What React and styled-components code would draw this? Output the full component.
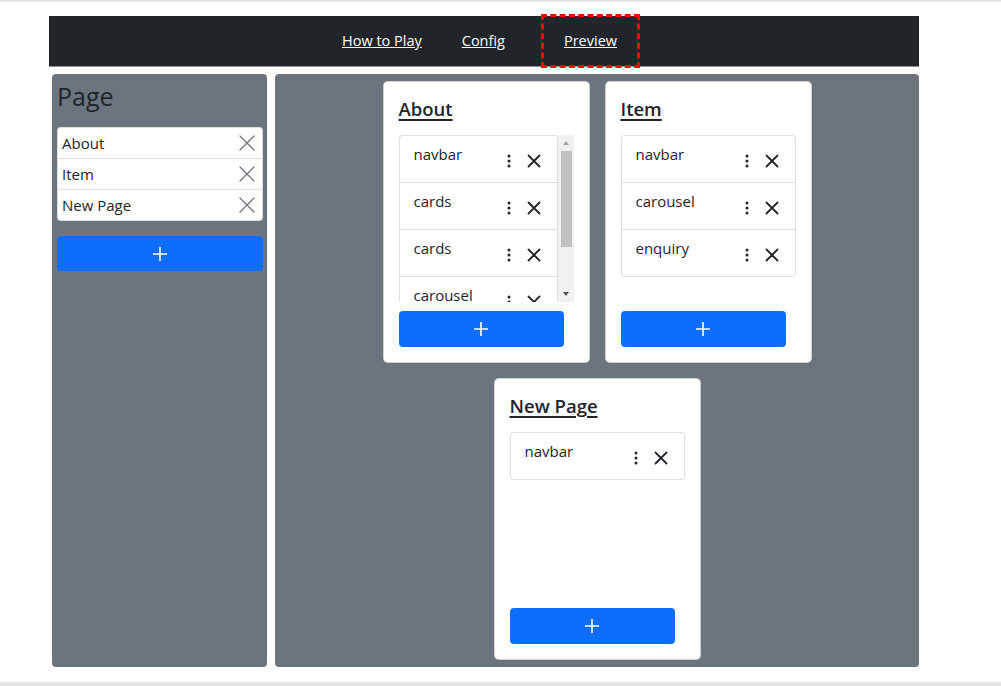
import React from "react";
import styled, { createGlobalStyle } from "styled-components";

const GlobalStyle = createGlobalStyle`
  * { box-sizing: border-box; }
  html, body { margin: 0; padding: 0; background: #fff; }
  body {
    font-family: "Open Sans", "Noto Sans", sans-serif;
    font-size: 15px;
    color: #212529;
  }
`;

const Frame = styled.div`
  height: 686px;
  border-top: 2px solid #e4e4e4;
  border-bottom: 4px solid #e4e4e4;
  padding-top: 14px;
  background: #fff;
`;

const Navbar = styled.nav`
  margin-left: 49px;
  width: 870px;
  height: 51px;
  padding-right: 6px;
  background: #212529;
  border-bottom: 1px solid #8d9196;
  display: flex;
  justify-content: center;
  align-items: center;
`;

const NavItem = styled.div`
  display: flex;
  align-items: center;
  height: ${(p) => (p.$highlight ? "54px" : "auto")};
  padding: 0 20px;
  margin-left: ${(p) => (p.$highlight ? "16px" : "0")};
  border: ${(p) => (p.$highlight ? "3px dashed #ff0000" : "none")};
`;

const NavLink = styled.a`
  color: #fff;
  text-decoration: underline;
  font-size: 14.5px;
  line-height: 22px;
`;

const Main = styled.div`
  display: flex;
  gap: 8px;
  margin: 7px 0 0 52px;
  width: 867px;
  height: 593px;
`;

const Sidebar = styled.aside`
  width: 215px;
  flex: none;
  background: #6c757d;
  border-radius: 4px;
  padding: 7px 4px 5px 5px;
`;

const SideTitle = styled.h3`
  margin: 0 0 16px;
  font-size: 25px;
  font-weight: 500;
  line-height: 30px;
  color: #212529;
`;

const PageList = styled.ul`
  list-style: none;
  margin: 0;
  padding: 0;
  background: #fff;
  border: 1px solid rgba(0, 0, 0, 0.125);
  border-radius: 4px;
`;

const PageRow = styled.li`
  display: flex;
  align-items: center;
  justify-content: space-between;
  padding: 4px 7px 4px 4px;
  line-height: 22px;
  font-size: 15px;
  & + & { border-top: 1px solid rgba(0, 0, 0, 0.125); }
`;

const AddButton = styled.button`
  display: flex;
  align-items: center;
  justify-content: center;
  width: ${(p) => p.$width || "100%"};
  height: ${(p) => p.$height || "35px"};
  margin-top: ${(p) => p.$mt || "0"};
  border: none;
  border-radius: 4px;
  background: #0d6efd;
  padding: 0;
  flex: none;
`;

const Board = styled.section`
  flex: 1;
  background: #6c757d;
  border-radius: 4px;
  padding: 7px 0;
  display: flex;
  flex-wrap: wrap;
  justify-content: center;
  align-content: flex-start;
  column-gap: 15px;
  row-gap: 15px;
`;

const Card = styled.div`
  width: 207px;
  height: 282px;
  background: #fff;
  border: 1px solid rgba(0, 0, 0, 0.175);
  border-radius: 5px;
  padding: 15px;
  display: flex;
  flex-direction: column;
`;

const CardTitle = styled.h5`
  margin: 0 0 14px;
  font-size: 18.5px;
  font-weight: 600;
  line-height: 24px;
  text-decoration: underline;
  text-underline-offset: 3px;
  text-decoration-thickness: 1.5px;
  color: #212529;
`;

const ScrollBox = styled.div`
  height: 167px;
  flex: none;
  display: flex;
`;

const Viewport = styled.div`
  flex: 1;
  min-width: 0;
  overflow: hidden;
`;

const ScrollBar = styled.div`
  width: 16px;
  flex: none;
  background: #f1f1f1;
  display: flex;
  flex-direction: column;
  align-items: center;
`;

const ScrollArrow = styled.div`
  height: 16px;
  width: 16px;
  flex: none;
  display: flex;
  align-items: center;
  justify-content: center;
  margin-top: ${(p) => (p.$down ? "auto" : "0")};
  &::after {
    content: "";
    width: 0;
    height: 0;
    border-left: 3.5px solid transparent;
    border-right: 3.5px solid transparent;
    ${(p) =>
      p.$down
        ? "border-top: 4px solid #505050;"
        : "border-bottom: 4px solid #a3a3a3;"}
  }
`;

const ScrollThumb = styled.div`
  width: 11px;
  margin-left: 1px;
  height: 96px;
  flex: none;
  background: #c1c1c1;
`;

const ComponentList = styled.ul`
  list-style: none;
  margin: 0;
  padding: 0;
`;

const ComponentRow = styled.li`
  height: 48px;
  display: flex;
  justify-content: space-between;
  padding: 7px 15px 7px 14px;
  border: 1px solid rgba(0, 0, 0, 0.125);
  background: #fff;
  font-size: 15px;
  line-height: 22px;
  color: #212529;
  & + & { margin-top: -1px; }
  &:first-child { border-radius: 4px 4px 0 0; }
  &:last-child { border-radius: 0 0 4px 4px; }
  &:only-child { border-radius: 4px; }
`;

const RowActions = styled.div`
  display: flex;
  align-items: center;
  align-self: center;
  margin-top: 4px;
  gap: 9px;
`;

const IconSvg = styled.svg`
  display: block;
  flex: none;
`;

const XIcon = ({ size = 16, color = "#212529", w = 1.8, inset = 2.5 }) => (
  <IconSvg width={size} height={size} viewBox="0 0 16 16">
    <path
      d={`M${inset} ${inset}L${16 - inset} ${16 - inset}M${16 - inset} ${inset}L${inset} ${16 - inset}`}
      stroke={color}
      strokeWidth={w}
      strokeLinecap="round"
      fill="none"
    />
  </IconSvg>
);

const DotsIcon = () => (
  <IconSvg width="16" height="16" viewBox="0 0 16 16">
    <circle cx="8" cy="3" r="1.5" fill="#212529" />
    <circle cx="8" cy="8" r="1.5" fill="#212529" />
    <circle cx="8" cy="13" r="1.5" fill="#212529" />
  </IconSvg>
);

const PlusIcon = () => (
  <IconSvg width="16" height="16" viewBox="0 0 16 16">
    <path d="M8 1V15M1 8H15" stroke="#fff" strokeWidth="1.6" fill="none" />
  </IconSvg>
);

const pages = [
  { name: "About", components: ["navbar", "cards", "cards", "carousel", "enquiry"] },
  { name: "Item", components: ["navbar", "carousel", "enquiry"] },
  { name: "New Page", components: ["navbar"] },
];

function PageCard({ page }) {
  const scroll = page.components.length > 3;
  return (
    <Card>
      <CardTitle>{page.name}</CardTitle>
      <ScrollBox>
        <Viewport>
          <ComponentList>
            {page.components.map((c, i) => (
              <ComponentRow key={i}>
                <span>{c}</span>
                <RowActions>
                  <DotsIcon />
                  <XIcon />
                </RowActions>
              </ComponentRow>
            ))}
          </ComponentList>
        </Viewport>
        {scroll && (
          <ScrollBar>
            <ScrollArrow />
            <ScrollThumb />
            <ScrollArrow $down />
          </ScrollBar>
        )}
      </ScrollBox>
      <AddButton $width="165px" $height="36px" $mt="auto" aria-label="Add component">
        <PlusIcon />
      </AddButton>
    </Card>
  );
}

export default function App() {
  return (
    <>
      <GlobalStyle />
      <Frame>
        <Navbar>
          <NavItem><NavLink href="#">How to Play</NavLink></NavItem>
          <NavItem><NavLink href="#">Config</NavLink></NavItem>
          <NavItem $highlight><NavLink href="#">Preview</NavLink></NavItem>
        </Navbar>
        <Main>
          <Sidebar>
            <SideTitle>Page</SideTitle>
            <PageList>
              {pages.map((p) => (
                <PageRow key={p.name}>
                  <span>{p.name}</span>
                  <XIcon size={16} color="#6c757d" w={1.3} inset={1} />
                </PageRow>
              ))}
            </PageList>
            <AddButton $mt="15px" aria-label="Add page">
              <PlusIcon />
            </AddButton>
          </Sidebar>
          <Board>
            {pages.map((p) => (
              <PageCard key={p.name} page={p} />
            ))}
          </Board>
        </Main>
      </Frame>
    </>
  );
}
